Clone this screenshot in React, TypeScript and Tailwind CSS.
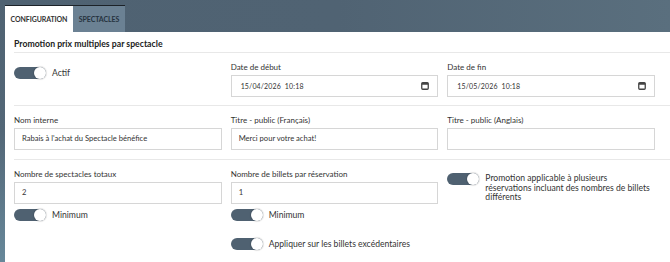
import { useState } from "react";

function Toggle({ on = true }: { on?: boolean }) {
  return (
    <div
      className={`relative h-[12px] w-[32px] shrink-0 rounded-full ${on ? "bg-[#4f6171]" : "bg-gray-300"}`}
    >
      <div
        className={`absolute top-0 h-[12px] w-[12px] rounded-full bg-white shadow-[0_0_1px_1px_rgba(0,0,0,0.12)] ${on ? "right-0" : "left-0"}`}
      />
    </div>
  );
}

function Label({ children }: { children: React.ReactNode }) {
  return <div className="h-[11px] text-[8px] leading-[11px] text-[#333]">{children}</div>;
}

function TextInput({ value }: { value: string }) {
  return (
    <div className="mt-[2px] flex h-[22px] items-center border border-[#d6d6d6] bg-white px-[7px] text-[7.6px] text-[#333]">
      {value}
    </div>
  );
}

function DateInput({ value }: { value: string }) {
  return (
    <div className="mt-[2px] flex h-[22px] items-center justify-between border border-[#d6d6d6] bg-white pl-[9px] pr-[8px] text-[7px] tracking-[0.15px] text-[#333]">
      <span className="whitespace-pre">{value}</span>
      <svg width="8" height="8" viewBox="0 0 8 8">
        <rect x="0.75" y="0.75" width="6.5" height="6.5" rx="1" fill="none" stroke="#444" strokeWidth="1.3" />
        <rect x="0.75" y="0.75" width="6.5" height="2" fill="#444" />
      </svg>
    </div>
  );
}

function Switch({ label }: { label: string }) {
  const [on, setOn] = useState(true);
  return (
    <div className="flex items-center gap-[6px]" onClick={() => setOn(!on)}>
      <Toggle on={on} />
      <span className="text-[8.6px] text-[#333]">{label}</span>
    </div>
  );
}

export default function App() {
  return (
    <div className="flex h-[262px] w-[670px] flex-col overflow-hidden bg-gradient-to-b from-[#4f6272] via-[#536777] to-[#67889a] pl-[5px] font-[Lato,'Open_Sans',sans-serif] text-[#333]">
      {/* Tabs */}
      <div className="h-[32px] bg-gradient-to-r from-[#4f6272] via-[#506373] to-[#5a6f7e] pt-[5px]">
        <div className="flex h-[27px] w-[120px] border-t border-[#1c2228]">
          <div className="flex w-[68px] items-center justify-center bg-white text-[7px] font-bold tracking-[-0.1px] text-[#333]">
            CONFIGURATION
          </div>
          <div className="flex w-[52px] items-center justify-center bg-[#6b8193] text-[7px] font-bold tracking-[-0.1px] text-[#26333f]">
            SPECTACLES
          </div>
        </div>
      </div>

      {/* Panel */}
      <div className="flex-1 bg-white pl-[9px]">
        <div className="flex h-[21px] items-end border-b border-[#e8e8e8] pb-[2px] text-[8.7px] font-bold text-[#222]">
          Promotion prix multiples par spectacle
        </div>

        {/* Row 1 */}
        <div className="grid h-[53px] grid-cols-3 gap-x-[9px] border-b border-[#e8e8e8] pr-[15px] pt-[9px]">
          <div className="pt-[5px]">
            <Switch label="Actif" />
          </div>
          <div>
            <Label>Date de début</Label>
            <DateInput value="15/04/2026  10:18" />
          </div>
          <div>
            <Label>Date de fin</Label>
            <DateInput value="15/05/2026  10:18" />
          </div>
        </div>

        {/* Row 2 */}
        <div className="grid h-[54px] grid-cols-3 gap-x-[9px] border-b border-[#e8e8e8] pr-[15px] pt-[9px]">
          <div>
            <Label>Nom interne</Label>
            <TextInput value="Rabais à l'achat du Spectacle bénéfice" />
          </div>
          <div>
            <Label>Titre - public (Français)</Label>
            <TextInput value="Merci pour votre achat!" />
          </div>
          <div>
            <Label>Titre - public (Anglais)</Label>
            <TextInput value="" />
          </div>
        </div>

        {/* Row 3 */}
        <div className="grid grid-cols-3 gap-x-[9px] pr-[15px] pt-[9px]">
          <div>
            <Label>Nombre de spectacles totaux</Label>
            <TextInput value="2" />
            <div className="mt-[5px]">
              <Switch label="Minimum" />
            </div>
          </div>
          <div>
            <Label>Nombre de billets par réservation</Label>
            <TextInput value="1" />
            <div className="mt-[5px]">
              <Switch label="Minimum" />
            </div>
            <div className="mt-[16px]">
              <Switch label="Appliquer sur les billets excédentaires" />
            </div>
          </div>
          <div className="flex items-start gap-[6px] pt-[4px]">
            <Toggle />
            <div className="w-[172px] pt-[1px] text-[8.6px] leading-[9.6px] text-[#333]">
              Promotion applicable à plusieurs réservations incluant des nombres de billets différents
            </div>
          </div>
        </div>
      </div>
    </div>
  );
}
